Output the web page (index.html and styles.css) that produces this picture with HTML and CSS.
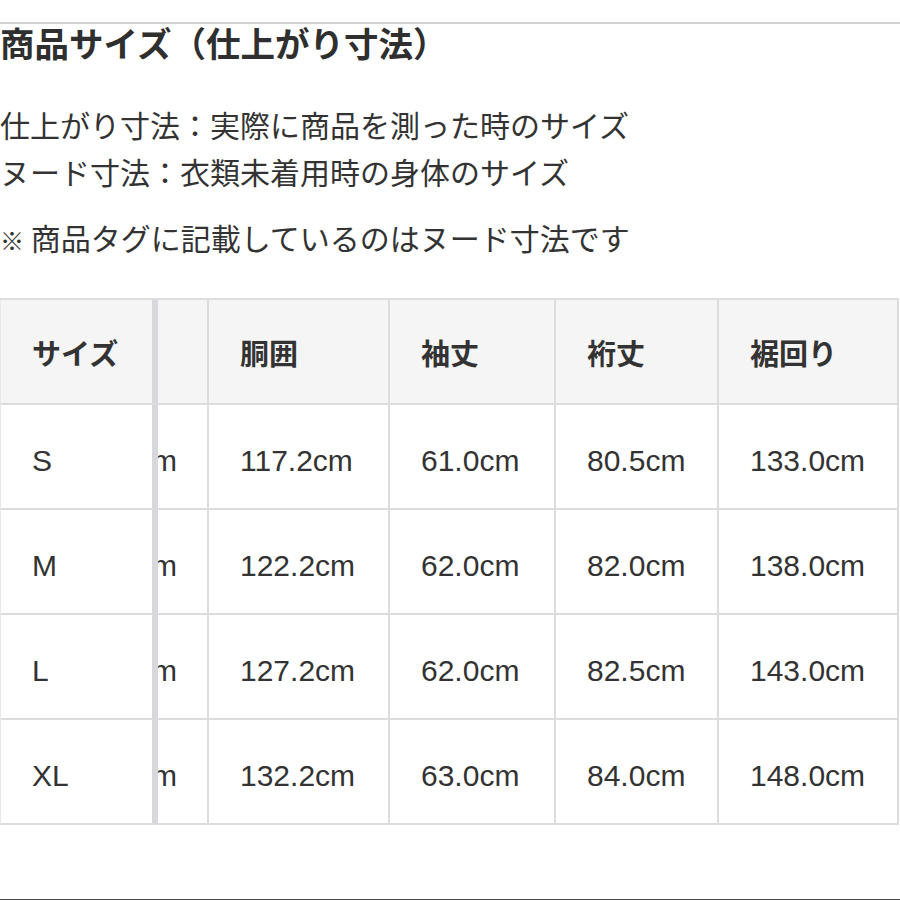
FILE: index.html
```html
<!DOCTYPE html>
<html lang="ja">
<head>
<meta charset="utf-8">
<title>商品サイズ</title>
<link rel="stylesheet" href="styles.css">
</head>
<body>
<div class="rule"></div>
<h1 class="title">商品サイズ（仕上がり寸法）</h1>
<div class="notes">
  <p class="lines">仕上がり寸法：実際に商品を測った時のサイズ<br>ヌード寸法：衣類未着用時の身体のサイズ</p>
  <p class="remark"><span class="mark">※</span> 商品タグに記載しているのはヌード寸法です</p>
</div>
<div class="table">
  <div class="cell head first">サイズ</div>
  <div class="cell head clip"></div>
  <div class="cell head">胴囲</div>
  <div class="cell head">袖丈</div>
  <div class="cell head">裄丈</div>
  <div class="cell head">裾回り</div>

  <div class="cell body first">S</div>
  <div class="cell body clip"><span>m</span></div>
  <div class="cell body">117.2cm</div>
  <div class="cell body">61.0cm</div>
  <div class="cell body">80.5cm</div>
  <div class="cell body">133.0cm</div>

  <div class="cell body first">M</div>
  <div class="cell body clip"><span>m</span></div>
  <div class="cell body">122.2cm</div>
  <div class="cell body">62.0cm</div>
  <div class="cell body">82.0cm</div>
  <div class="cell body">138.0cm</div>

  <div class="cell body first">L</div>
  <div class="cell body clip"><span>m</span></div>
  <div class="cell body">127.2cm</div>
  <div class="cell body">62.0cm</div>
  <div class="cell body">82.5cm</div>
  <div class="cell body">143.0cm</div>

  <div class="cell body first">XL</div>
  <div class="cell body clip"><span>m</span></div>
  <div class="cell body">132.2cm</div>
  <div class="cell body">63.0cm</div>
  <div class="cell body">84.0cm</div>
  <div class="cell body">148.0cm</div>
</div>
<div class="bottom-line"></div>
</body>
</html>
```
FILE: styles.css
```css
html, body {
  margin: 0;
  padding: 0;
  background: #ffffff;
}
body {
  font-family: "Noto Sans CJK JP", "Noto Sans", sans-serif;
  color: #333333;
  width: 900px;
  overflow: hidden;
}
.rule {
  margin-top: 22px;
  height: 2px;
  background: #d3d3d3;
}
.title {
  margin: 0;
  font-size: 34.5px;
  line-height: 36px;
  font-weight: 700;
  color: #2f2f2f;
  white-space: nowrap;
}
.notes {
  margin-top: 41px;
  font-size: 30px;
  line-height: 47px;
  color: #333333;
}
.notes p {
  margin: 0;
  white-space: nowrap;
}
.notes .remark {
  margin-top: 19px;
}
.mark {
  font-size: 24px;
}
.table {
  margin-top: 35px;
  display: grid;
  grid-template-columns: 157px 51px 181px 166px 163px 180px;
  grid-auto-rows: 105px;
  border-top: 2px solid #dedede;
  border-left: 1px solid #e8e8e8;
  width: 898px;
}
.cell {
  box-sizing: border-box;
  border-right: 2px solid #dcdcdc;
  border-bottom: 2px solid #dcdcdc;
  display: flex;
  align-items: center;
  padding-left: 31px;
  white-space: nowrap;
}
.cell.first {
  border-right: 6px solid #d8d8dc;
}
.head {
  background: #f5f5f5;
  font-weight: 700;
  font-size: 29px;
  color: #333333;
}
.body {
  background: #ffffff;
  font-family: "Liberation Sans", "Noto Sans CJK JP", sans-serif;
  font-size: 30px;
  color: #333333;
  padding-top: 8px;
}
.clip {
  padding-left: 0;
  padding-right: 32px;
  justify-content: flex-end;
  overflow: hidden;
}
.clip span {
  flex: none;
  margin-right: -2px;
}
.bottom-line {
  margin-top: 74px;
  height: 1px;
  background: #4a4a4a;
}
```
